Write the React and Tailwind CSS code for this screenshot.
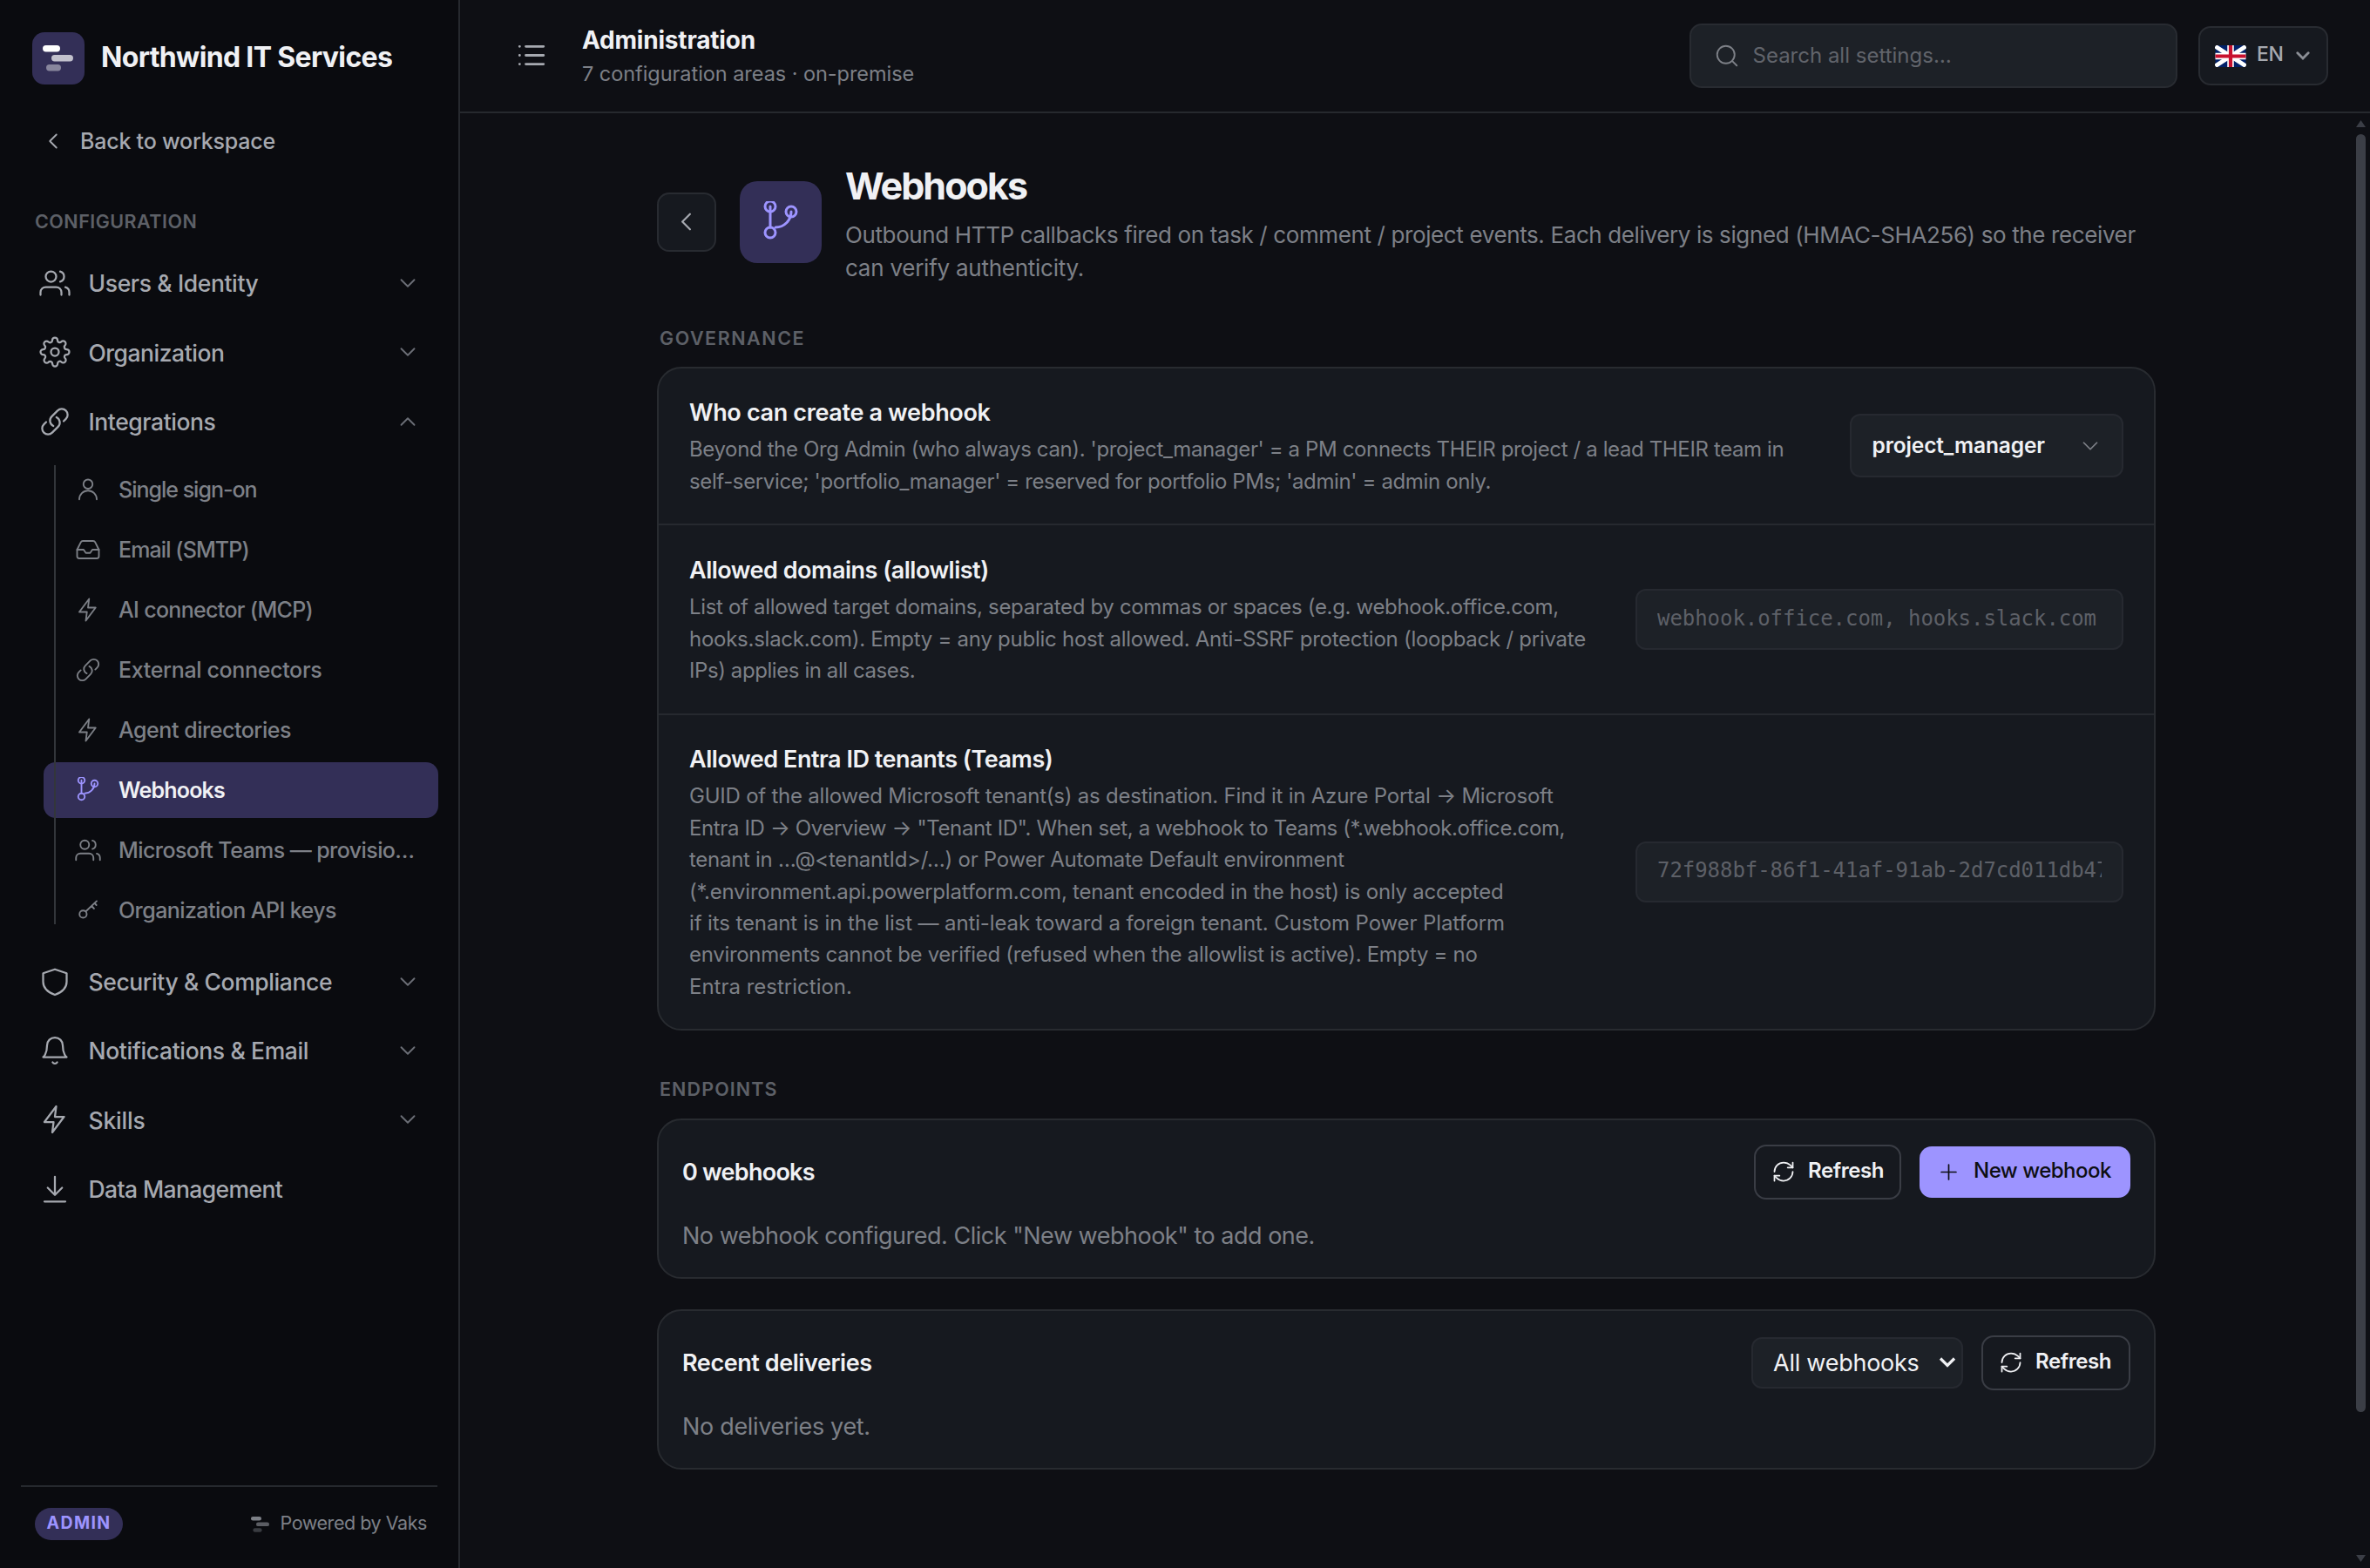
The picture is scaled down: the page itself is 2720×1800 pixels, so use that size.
import React from "react";
import { RefreshCw } from "lucide-react";

/* Stroke icons, 24 unit grid */
const ICONS = {
  users: (
    <>
      <path d="M17 21v-2a4 4 0 0 0-4-4H5a4 4 0 0 0-4 4v2" />
      <circle cx="9" cy="7" r="4" />
      <path d="M23 21v-2a4 4 0 0 0-3-3.87M16 3.13a4 4 0 0 1 0 7.75" />
    </>
  ),
  gear: (
    <>
      <circle cx="12" cy="12" r="3" />
      <path d="M19.4 15a1.65 1.65 0 0 0 .33 1.82l.06.06a2 2 0 0 1 0 2.83 2 2 0 0 1-2.83 0l-.06-.06a1.65 1.65 0 0 0-1.82-.33 1.65 1.65 0 0 0-1 1.51V21a2 2 0 0 1-2 2 2 2 0 0 1-2-2v-.09A1.65 1.65 0 0 0 9 19.4a1.65 1.65 0 0 0-1.82.33l-.06.06a2 2 0 0 1-2.83 0 2 2 0 0 1 0-2.83l.06-.06a1.65 1.65 0 0 0 .33-1.82 1.65 1.65 0 0 0-1.51-1H3a2 2 0 0 1-2-2 2 2 0 0 1 2-2h.09A1.65 1.65 0 0 0 4.6 9a1.65 1.65 0 0 0-.33-1.82l-.06-.06a2 2 0 0 1 0-2.83 2 2 0 0 1 2.83 0l.06.06a1.65 1.65 0 0 0 1.82.33H9a1.65 1.65 0 0 0 1-1.51V3a2 2 0 0 1 2-2 2 2 0 0 1 2 2v.09a1.65 1.65 0 0 0 1 1.51 1.65 1.65 0 0 0 1.82-.33l.06-.06a2 2 0 0 1 2.83 0 2 2 0 0 1 0 2.83l-.06.06a1.65 1.65 0 0 0-.33 1.82V9a1.65 1.65 0 0 0 1.51 1H21a2 2 0 0 1 2 2 2 2 0 0 1-2 2h-.09a1.65 1.65 0 0 0-1.51 1z" />
    </>
  ),
  link: (
    <path d="M13.19 8.688a4.5 4.5 0 0 1 1.242 7.244l-4.5 4.5a4.5 4.5 0 0 1-6.364-6.364l1.757-1.757m13.35-.622 1.757-1.757a4.5 4.5 0 0 0-6.364-6.364l-4.5 4.5a4.5 4.5 0 0 0 1.242 7.244" />
  ),
  shield: <path d="M12 2.5l9 3V12c0 5-4 8.2-9 10-5-1.8-9-5-9-10V5.5z" />,
  bell: (
    <>
      <path d="M18 8A6 6 0 0 0 6 8c0 7-3 9-3 9h18s-3-2-3-9" />
      <path d="M13.73 21a2 2 0 0 1-3.46 0" />
    </>
  ),
  bolt: <path d="M13 2L4 14h7l-1 8 9-12h-7z" />,
  download: <path d="M12 2.5v13.5M6.5 11l5.5 5.5 5.5-5.5M4 21.5h16" />,
  user: (
    <>
      <circle cx="12" cy="7" r="4.2" />
      <path d="M4 21a8 8 0 0 1 16 0" />
    </>
  ),
  inbox: (
    <>
      <path d="M22 12h-6l-2 3h-4l-2-3H2" />
      <path d="M5.45 5.11L2 12v6a2 2 0 0 0 2 2h16a2 2 0 0 0 2-2v-6l-3.45-6.89A2 2 0 0 0 16.76 4H7.24a2 2 0 0 0-1.79 1.11z" />
    </>
  ),
  branch: (
    <>
      <circle cx="6" cy="3" r="3" />
      <circle cx="6" cy="18" r="3" />
      <circle cx="18" cy="6" r="3" />
      <path d="M6 3v12M18 6a9 9 0 0 1-9 9" />
    </>
  ),
  key: (
    <>
      <circle cx="7.5" cy="15.5" r="3.3" />
      <path d="M10 13L20 3.5M15.3 8l2.2 2.4M18 5.4l1.7 1.8" />
    </>
  ),
  down: <path d="M6 9l6 6 6-6" />,
  up: <path d="M6 15l6-6 6 6" />,
  left: <path d="M15 6l-6 6 6 6" />,
  plus: <path d="M12 4.5v15M4.5 12h15" />,
  search: (
    <>
      <circle cx="11" cy="11" r="8" />
      <path d="M21 21l-4.3-4.3" />
    </>
  ),
};

function Icon({ name, size = 36, weight = 1.5, className = "" }) {
  return (
    <svg
      width={size}
      height={size}
      viewBox="0 0 24 24"
      fill="none"
      stroke="currentColor"
      strokeWidth={weight}
      strokeLinecap="round"
      strokeLinejoin="round"
      className={`shrink-0 ${className}`}
    >
      {ICONS[name]}
    </svg>
  );
}

/* Three staggered bars */
function Mark({ width, height }) {
  return (
    <svg width={width} height={height} viewBox="0 0 35 30" fill="currentColor" className="shrink-0">
      <rect x="0" y="0" width="20" height="7.5" rx="3.7" />
      <rect x="10" y="11" width="25" height="7.5" rx="3.7" opacity="0.7" />
      <rect x="4" y="22" width="17" height="7.5" rx="3.7" opacity="0.42" />
    </svg>
  );
}

function Flag() {
  return (
    <svg width="36" height="25" viewBox="0 0 36 25" className="shrink-0">
      <rect x="0.5" width="35" height="25" rx="2" fill="#012169" />
      <path d="M2.5 2.5l31 20M33.5 2.5l-31 20" stroke="#fff" strokeWidth="5" strokeLinecap="round" />
      <path d="M18 0v25M0.5 12.5h35" stroke="#fff" strokeWidth="7.5" />
      <path d="M18 0v25M0.5 12.5h35" stroke="#c8102e" strokeWidth="4.2" />
    </svg>
  );
}

const topGroups = [
  { icon: "users", label: "Users & Identity", track: "tracking-[-0.38px]", chevron: "down" },
  { icon: "gear", label: "Organization", track: "tracking-[-0.48px]", chevron: "down" },
  { icon: "link", label: "Integrations", track: "tracking-[-0.42px]", chevron: "up" },
];

const integrations = [
  { icon: "user", label: "Single sign-on", track: "tracking-[-1px]" },
  { icon: "inbox", label: "Email (SMTP)", track: "tracking-[-0.9px]" },
  { icon: "bolt", label: "AI connector (MCP)", track: "tracking-[-0.68px]" },
  { icon: "link", label: "External connectors", track: "tracking-[-0.34px]" },
  { icon: "bolt", label: "Agent directories", track: "tracking-[-0.46px]" },
  { icon: "branch", label: "Webhooks", track: "tracking-[-0.8px]", active: true },
  { icon: "users", label: "Microsoft Teams — provisio…", track: "tracking-[-0.58px]" },
  { icon: "key", label: "Organization API keys", track: "tracking-[-0.57px]" },
];

const bottomGroups = [
  { icon: "shield", label: "Security & Compliance", track: "tracking-[-0.4px]", chevron: "down" },
  { icon: "bell", label: "Notifications & Email", track: "tracking-[-0.37px]", chevron: "down" },
  { icon: "bolt", label: "Skills", track: "tracking-[-0.2px]", chevron: "down" },
  { icon: "download", label: "Data Management", track: "tracking-[-0.6px]" },
];

function NavGroup({ icon, label, track, chevron }) {
  return (
    <div className="flex h-[79.4px] shrink-0 items-center pt-px pr-[43px] pl-[44.5px] text-[#a6a9b0]">
      <Icon name={icon} />
      <span className={`ml-[21px] flex-1 pt-[2px] text-[26.5px] font-medium whitespace-nowrap ${track}`}>{label}</span>
      {chevron && <Icon name={chevron} size={30} className="text-[#6b6e76]" />}
    </div>
  );
}

function NavItem({ icon, label, track, active }) {
  return (
    <div
      className={`mr-[23px] ml-[50px] flex h-16 items-center rounded-[14px] pl-9 ${
        active ? "bg-[#332f57] text-[#f0f1f4]" : "text-[#7d8087]"
      }`}
    >
      <Icon name={icon} size={30} className={active ? "text-[#9d94ff]" : ""} />
      <span
        className={`ml-5 pt-[2px] text-[25px] whitespace-nowrap ${track} ${active ? "font-semibold" : "font-medium"}`}
      >
        {label}
      </span>
    </div>
  );
}

function Sidebar() {
  return (
    <aside className="flex w-[528px] shrink-0 flex-col border-r-2 border-[#26292e] bg-[#0a0b0f]">
      <div className="flex h-[130px] shrink-0 items-start gap-[19px] pt-[37px] pl-[37px]">
        <div className="flex size-[60px] items-center justify-center rounded-[14px] bg-[#332f57] pr-[2px] text-white">
          <Mark width={35} height={30} />
        </div>
        <span className="text-[32px] leading-[58px] font-bold tracking-[-0.66px] whitespace-nowrap text-[#f0f1f4]">
          Northwind IT Services
        </span>
      </div>

      <div className="flex h-16 shrink-0 items-center gap-[16px] pl-[46px] text-[#a6a9b0]">
        <Icon name="left" size={30} />
        <span className="pt-[2px] text-[25px] font-medium tracking-[-0.22px]">Back to workspace</span>
      </div>

      <div className="mt-10 mb-[10.8px] h-10 shrink-0 pl-10 text-[21.5px] leading-10 font-semibold tracking-[0.48px] text-[#5d6067]">
        CONFIGURATION
      </div>

      {topGroups.map((g) => (
        <NavGroup key={g.label} {...g} />
      ))}

      <div className="relative mb-[9.5px] flex shrink-0 flex-col gap-[5px] pt-[7px]">
        {integrations.map((i) => (
          <NavItem key={i.label} {...i} />
        ))}
        <div className="absolute top-[11px] bottom-[16px] left-[62px] w-0.5 bg-[#33363b]" />
      </div>

      {bottomGroups.map((g) => (
        <NavGroup key={g.label} {...g} />
      ))}

      <div className="mx-6 mt-auto flex h-[95px] shrink-0 items-start justify-between border-t-2 border-[#26292e] pt-6 pr-[12px] pl-4">
        <span className="flex h-[37px] w-[101px] items-center justify-center rounded-full bg-[#332f57] pb-[2px] text-[19.5px] font-bold tracking-[1.37px] text-[#9d94ff]">
          ADMIN
        </span>
        <span className="flex h-[37px] items-center gap-[13px] text-[21.5px] tracking-[-0.45px] text-[#7d8087]">
          <Mark width={21} height={18} />
          <span className="pb-[3px]">Powered by Vaks</span>
        </span>
      </div>
    </aside>
  );
}

function Header() {
  return (
    <header className="flex h-[130px] shrink-0 items-center border-b-2 border-[#26292e] pr-12 pl-[66px]">
      <svg width="32" height="26" viewBox="0 0 32 26" className="shrink-0 text-[#a6a9b0]">
        <path
          d="M2.3 2.3h.1M2.3 12.5h.1M2.3 22.6h.1M9.5 2.3h20.3M9.5 12.5h20.3M9.5 22.6h20.3"
          stroke="currentColor"
          strokeWidth="2.8"
          strokeLinecap="round"
        />
      </svg>
      <div className="ml-[42px] flex-1 pt-[3px] whitespace-nowrap">
        <div className="text-[28px] leading-[38.5px] font-bold tracking-[-0.2px] text-[#f0f1f4]">Administration</div>
        <div className="text-[23.5px] leading-[38.5px] tracking-[-0.05px] text-[#7d8087]">
          7 configuration areas · on-premise
        </div>
      </div>
      <div className="flex h-[74px] w-[560px] items-center gap-[15px] rounded-[14px] border-2 border-[#282b31] bg-[#1d2127] pl-[25.5px]">
        <Icon name="search" size={30} className="text-[#7d8087]" />
        <span className="text-[24px] text-[#61646b]">Search all settings…</span>
      </div>
      <div className="ml-6 flex h-[68px] w-[149px] items-center rounded-[14px] border-2 border-[#282b31] bg-[#16191f] pl-[17px]">
        <Flag />
        <span className="ml-[12px] pb-[3px] text-[23px] font-medium tracking-[-0.3px] text-[#a6a9b0]">EN</span>
        <svg width="16" height="10" viewBox="0 0 16 10" className="ml-[14px] text-[#8b8e95]" fill="none">
          <path d="M1.8 1.8L8 8l6.2-6.2" stroke="currentColor" strokeWidth="2.8" strokeLinecap="round" />
        </svg>
      </div>
    </header>
  );
}

const settings = [
  {
    title: "Who can create a webhook",
    track: "tracking-[-0.35px]",
    height: "h-[180.5px]",
    lines: [
      [
        "Beyond the Org Admin (who always can). 'project_manager' = a PM connects THEIR project / a lead THEIR team in",
        "tracking-[-0.375px]",
      ],
      [
        "self-service; 'portfolio_manager' = reserved for portfolio PMs; 'admin' = admin only.",
        "tracking-[-0.37px]",
      ],
    ],
    control: (
      <div className="flex h-[73px] w-[314px] items-center justify-between rounded-[12px] border-2 border-[#262930] bg-[#1d2127] pr-[21px] pl-[23.5px]">
        <span className="text-[24.5px] font-semibold tracking-[-0.12px] text-[#f0f1f4]">project_manager</span>
        <Icon name="down" size={30} weight={1.4} className="text-[#7d8087]" />
      </div>
    ),
  },
  {
    title: "Allowed domains (allowlist)",
    track: "tracking-[-0.49px]",
    height: "h-[218px]",
    lines: [
      [
        "List of allowed target domains, separated by commas or spaces (e.g. webhook.office.com,",
        "tracking-[-0.33px]",
      ],
      [
        "hooks.slack.com). Empty = any public host allowed. Anti-SSRF protection (loopback / private",
        "tracking-[-0.26px]",
      ],
      ["IPs) applies in all cases.", "tracking-[-0.42px]"],
    ],
    control: <MonoField>webhook.office.com, hooks.slack.com</MonoField>,
  },
  {
    title: "Allowed Entra ID tenants (Teams)",
    track: "tracking-[-0.46px]",
    height: "h-[359.5px]",
    lines: [
      [
        "GUID of the allowed Microsoft tenant(s) as destination. Find it in Azure Portal → Microsoft",
        "tracking-[-0.23px]",
      ],
      [
        'Entra ID → Overview → "Tenant ID". When set, a webhook to Teams (*.webhook.office.com,',
        "tracking-[-0.37px]",
      ],
      ["tenant in …@<tenantId>/…) or Power Automate Default environment", "tracking-[-0.28px]"],
      [
        "(*.environment.api.powerplatform.com, tenant encoded in the host) is only accepted",
        "tracking-[-0.23px]",
      ],
      [
        "if its tenant is in the list — anti-leak toward a foreign tenant. Custom Power Platform",
        "tracking-[-0.12px]",
      ],
      [
        "environments cannot be verified (refused when the allowlist is active). Empty = no",
        "tracking-[-0.31px]",
      ],
      ["Entra restriction.", "tracking-[0px]"],
    ],
    control: <MonoField>72f988bf-86f1-41af-91ab-2d7cd011db47</MonoField>,
  },
];

function MonoField({ children }) {
  return (
    <div className="flex h-[70px] w-[560px] items-center rounded-[12px] border-2 border-[#262930] bg-[#1d2127] px-[23px]">
      <span className="w-full overflow-hidden pb-[3px] font-['DejaVu_Sans_Mono',monospace] text-[24px] tracking-[-0.05px] whitespace-nowrap text-[#5d6067]">
        {children}
      </span>
    </div>
  );
}

function SettingRow({ title, track, height, lines, control, last }) {
  return (
    <div
      className={`flex items-center justify-between pr-[35px] pl-[35px] ${height} ${
        last ? "" : "border-b-2 border-[#26292f]"
      }`}
    >
      <div className="pt-[3px] whitespace-nowrap">
        <div className={`mb-[5px] text-[27px] leading-[38px] font-semibold text-[#f0f1f4] ${track}`}>{title}</div>
        {lines.map(([text, t]) => (
          <div key={text} className={`text-[24px] leading-[36.4px] text-[#7d8087] ${t}`}>
            {text}
          </div>
        ))}
      </div>
      {control}
    </div>
  );
}

function SectionLabel({ children, className }) {
  return (
    <div className={`pl-[3px] text-[21.5px] leading-[30px] font-semibold text-[#5d6067] ${className}`}>{children}</div>
  );
}

function RefreshButton({ width }) {
  return (
    <div
      className={`flex h-[63px] items-center gap-[14px] rounded-[14px] border-2 border-[#3a3d45] pl-[18px] text-[#f0f1f4] ${width}`}
    >
      <RefreshCw size={28} strokeWidth={1.5} />
      <span className="pb-[2px] text-[24px] font-semibold tracking-[-0.4px]">Refresh</span>
    </div>
  );
}

function Panel({ title, track, empty, emptyTrack, className, children }) {
  return (
    <section className={`h-[184px] rounded-[28px] border-2 border-[#282b30] bg-[#16191f] pt-7 pr-[27px] pl-[27px] ${className}`}>
      <div className="flex h-[63px] items-center">
        <h2 className={`flex-1 pt-[3px] text-[27px] font-semibold text-[#f0f1f4] ${track}`}>{title}</h2>
        {children}
      </div>
      <p className={`mt-[23px] text-[27px] leading-[38px] text-[#7d8087] ${emptyTrack}`}>{empty}</p>
    </section>
  );
}

export default function App() {
  return (
    <div className="flex h-[1800px] w-[2720px] overflow-hidden bg-[#0e0f14] font-['Inter',sans-serif] antialiased">
      <Sidebar />
      <div className="flex flex-1 flex-col">
        <Header />
        <div className="flex flex-1 justify-between">
          <main className="ml-[226px] w-[1720px] pt-[54.5px]">
            <div className="flex items-center">
              <div className="mb-[2px] flex size-[68px] items-center justify-center rounded-[14px] border-2 border-[#282b31] bg-[#16191f] pr-[2px] text-[#a6a9b0]">
                <Icon name="left" size={35} />
              </div>
              <div className="mb-[2px] ml-[27px] flex size-[94px] items-center justify-center rounded-[20px] bg-[#332f57] text-[#9d94ff]">
                <Icon name="branch" size={48} />
              </div>
              <div className="ml-[27px] whitespace-nowrap">
                <h1 className="mb-[10px] text-[43px] leading-[56px] font-bold tracking-[-1.95px] text-[#f0f1f4]">
                  Webhooks
                </h1>
                <p className="text-[26px] leading-[38px] tracking-[-0.38px] text-[#7d8087]">
                  Outbound HTTP callbacks fired on task / comment / project events. Each delivery is signed
                  (HMAC-SHA256) so the receiver
                  <br />
                  <span className="tracking-[-0.25px]">can verify authenticity.</span>
                </p>
              </div>
            </div>

            <SectionLabel className="mt-[46px] tracking-[1.55px]">GOVERNANCE</SectionLabel>
            <section className="mt-[18px] rounded-[28px] border-2 border-[#282b30] bg-[#16191f]">
              {settings.map((s, i) => (
                <SettingRow key={s.title} {...s} last={i === settings.length - 1} />
              ))}
            </section>

            <SectionLabel className="mt-[52px] tracking-[1.1px]">ENDPOINTS</SectionLabel>
            <Panel
              className="mt-[19px]"
              title="0 webhooks"
              track="tracking-[-0.75px]"
              empty={'No webhook configured. Click "New webhook" to add one.'}
              emptyTrack="tracking-[-0.49px]"
            >
              <RefreshButton width="w-[169px]" />
              <div className="ml-[21px] flex h-[59px] w-[242px] items-center rounded-[14px] bg-[#9d94ff] pl-[20px] text-[#0e0f13]">
                <Icon name="plus" size={27} />
                <span className="ml-[15px] pb-[2px] text-[24px] font-medium tracking-[-0.5px] whitespace-nowrap">
                  New webhook
                </span>
              </div>
            </Panel>

            <Panel
              className="mt-[35px]"
              title="Recent deliveries"
              track="tracking-[-0.43px]"
              empty="No deliveries yet."
              emptyTrack="tracking-[-0.32px]"
            >
              <div className="flex h-[59px] w-[243px] items-center justify-between rounded-[12px] border-2 border-[#262930] bg-[#1d2127] pr-[6px] pl-[23px] text-[#f0f1f4]">
                <span className="pt-[2px] text-[27px] tracking-[-0.25px]">All webhooks</span>
                <svg width="20" height="12" viewBox="0 0 20 12" fill="none">
                  <path d="M2 1.5l8 8 8-8" stroke="currentColor" strokeWidth="3.2" />
                </svg>
              </div>
              <div className="ml-[21px]">
                <RefreshButton width="w-[171px]" />
              </div>
            </Panel>
          </main>

          {/* Scrollbar */}
          <div className="flex w-4 flex-col items-start">
            <svg width="11" height="8" viewBox="0 0 11 8" className="mt-[8px] text-[#3b3e46]">
              <path d="M5.5 0L11 8H0z" fill="currentColor" />
            </svg>
            <div className="mt-[8px] h-[1467px] w-[11px] rounded-full bg-[#3b3e46]" />
            <svg width="11" height="8" viewBox="0 0 11 8" className="mt-auto mb-[7px] text-[#3b3e46]">
              <path d="M5.5 8L0 0h11z" fill="currentColor" />
            </svg>
          </div>
        </div>
      </div>
    </div>
  );
}
